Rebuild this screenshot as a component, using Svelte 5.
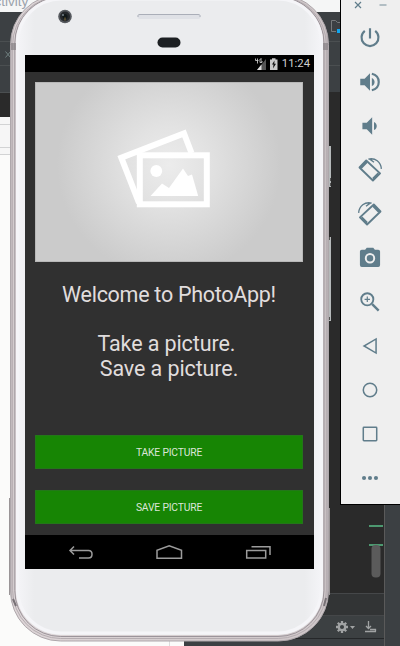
<script>
  const buttons = ['TAKE PICTURE', 'SAVE PICTURE'];
  const tools = ['power', 'volume-up', 'volume-down', 'rotate-left', 'rotate-right', 'camera', 'zoom', 'back', 'home', 'overview', 'more'];
</script>

<main class="desktop">
  <svg class="backdrop" width="400" height="646" viewBox="0 0 400 646">
    <rect width="400" height="646" fill="#fbfbfa" />
    <rect width="400" height="12" fill="#f5f6f6" />
    <text x="-5.500" y="6" font-size="13.500" fill="#9ba3ab" font-family="Liberation Sans, sans-serif">ctivity</text>
    <path d="M0 12h400v81H0z" fill="#3c4043" />
    <path d="M0 41.500h400M0 65.500h400M0 92.500h400" stroke="#4b4f51" />
    <path d="M0 93h400v24H0z" fill="#2a2a2a" />
    <path d="M5.500 51.500l5 6M10.500 51.500l-5 6" stroke="#708080" />
    <path d="M0 117h50v37H0z" fill="#f6f6f6" />
    <path d="M0 124.500h50M0 147.500h50M0 154.500h50" stroke="#d2d3d4" />
    <path d="M169.500 640v6" stroke="#ddd" />
    <path d="M184 600h216v46H184zM384 500h16v146h-16z" fill="#3c4043" />
    <path d="M184 638.500h200" stroke="#252729" />
    <path d="M300 92h100v501H300z" fill="#2a2a2a" />
    <path d="M300 593h84v22h-84z" fill="#323435" />
    <path d="M300 593.500h84M300 615.500h84" stroke="#454749" />
    <path d="M300 616h84v22h-84z" fill="#3c4042" />
    <path d="M384 500h16v146h-16z" fill="#3c4043" />
    <path d="M384.500 500v146" stroke="#5a5a5a" />
    <path d="M369 526h14M369 545h14" stroke="#4d9870" stroke-width="2" />
    <rect x="371.500" y="545" width="9" height="32.500" rx="4" fill="#5b5b5b" />
    <path d="M336 31.500h-4.500v-11h4l2 2h4v8" fill="none" stroke="#777a7c" />
    <path d="M337 29h4v4h-4z" fill="#10a5ef" />
    <g stroke="#a1a3a4" fill="none" stroke-width="2.300">
      <circle cx="342" cy="627" r="3.200" />
      <path d="M342 621v3M342 630v3M336 627h3M345 627h3M337.800 622.800l2 2M344.200 629.200l2 2M346.200 622.800l-2 2M339.800 629.200l-2 2" />
    </g>
    <path d="M350 626h5l-2.500 3z" fill="#a1a3a4" />
    <path d="M368.500 621v7M366 626l2.500 2.500 2.500-2.500M365 631.500h11M370 629.500h5.500v2" fill="none" stroke="#a1a3a4" stroke-width="1.300" />
  </svg>

  <svg class="frame" width="340" height="646" viewBox="0 0 340 646">
    <defs>
      <linearGradient id="metal">
        <stop offset="0" stop-color="#b4adb1" />
        <stop offset=".01" stop-color="#ddd5d7" />
        <stop offset=".99" stop-color="#cfc7c9" />
        <stop offset="1" stop-color="#ada6ab" />
      </linearGradient>
      <linearGradient id="face">
        <stop offset="0" stop-color="#f5f5f8" />
        <stop offset=".06" stop-color="#ebecee" />
        <stop offset=".94" stop-color="#ebecee" />
        <stop offset="1" stop-color="#f5f5f8" />
      </linearGradient>
    </defs>
    <path d="M328 146h3v41h-3zM328 237h3v84h-3z" fill="#b5b9ba" />
    <path d="M330.500 178v3M330.500 183v3M329.500 237v3M329.500 317v3" stroke="#555" />
    <path d="M9.500 498v97M329.500 508v87" stroke="#9a9597" />
    <rect x="10.500" y="-5.500" width="318" height="646.500" rx="50" fill="url(#metal)" stroke="#aea7ab" />
    <rect x="12.700" y="-3.500" width="313.600" height="642" rx="48" fill="none" stroke="#b5adb1" />
    <rect x="14.800" y="-3" width="309.200" height="639.500" rx="46" fill="none" stroke="#9b949a" />
    <rect x="16" y="-2" width="307" height="637" rx="45" fill="url(#face)" />
    <rect x="17.500" y="-1" width="304" height="634" rx="44" fill="none" stroke="#f5f5f8" stroke-width="3" />
    <path d="M11 43h5v7h-5zM323 43h5v7h-5z" fill="#878286" opacity=".7" />
    <path d="M13 599l3 7M326 598l-2 8" stroke="#777176" stroke-width="2" />
    <circle cx="65" cy="16.500" r="6.800" fill="#55585d" />
    <circle cx="65" cy="16.500" r="5" fill="#25282c" />
    <circle cx="65" cy="16.500" r="2.500" fill="#111719" />
    <path d="M65 17.500v3" stroke="#846d37" />
    <circle cx="63" cy="15" r="1" fill="#77838a" />
    <rect x="137.500" y="14" width="63" height="5" rx="2.500" fill="#dfe1e6" />
    <path d="M138 17v-1.500q0-1 2-1h58q2 0 2 1v1.500" fill="none" stroke="#aaaeb8" />
    <rect x="157.500" y="37.500" width="23" height="10" rx="5" fill="#1c1f22" />
  </svg>

  <section class="screen">
    <header class="status">
      <svg width="25" height="14" viewBox="254 56 25 14">
        <path d="M266 58v11h-9z" fill="#555" />
        <path d="M261.500 63.500v5.500H257z" fill="#ddd" />
        <path d="M255.500 57.500v2h3M257.500 57.500v5M262 58h-2v3.500h2V60h-1" fill="none" stroke="#c5c5c5" stroke-width=".9" />
        <path d="M270 58.500h2v-1.200h3.500v1.200h2V69H270z" fill="#c9c9c9" />
        <path d="M274.500 59.500l-2.500 4h1.500l-.5 4 3-4.700h-1.700z" fill="#111" />
      </svg>
      <span>11:24</span>
    </header>
    <div class="app">
      <div class="photo">
        <svg width="268" height="180" viewBox="35 82 268 180">
          <g fill="none" stroke="#fff" stroke-width="6">
            <path d="M191.500 153L184 133.500 121.300 157.700 139 203" />
            <rect x="139.800" y="155.300" width="67" height="49" />
          </g>
          <circle cx="156.300" cy="171" r="5.900" fill="#fff" />
          <path d="M150.500 196L162 183.500l7 4.500 14-19.500 5 7.500 4-1.500 6.200 21.500z" fill="#fff" />
        </svg>
      </div>
      <p class="message"><span class="welcome">Welcome to PhotoApp!</span><br /><br />Take a picture.&nbsp;<br />Save a picture.</p>
      <div class="actions">
        {#each buttons as label}
          <button>{label}</button>
        {/each}
      </div>
    </div>
    <nav class="nav">
      <svg width="289" height="34" viewBox="25 535 289 34" fill="none" stroke="#9c9c9c" stroke-width="1.500">
        <path d="M74 546.500l-4 4 4 4M70 550.500h18.500q3.500 0 3.500 3.800t-3.500 3.800H79" />
        <path d="M157 558.200v-8l12.200-4.400 12.300 4.400v8z" />
        <path d="M246.700 550.500h19v7.500h-19zM251.500 546.800h18.500v8.200" />
      </svg>
    </nav>
  </section>

  <aside class="panel">
    <div class="window-controls">
      <svg width="8" height="8" viewBox="0 0 8 8"><path d="M1 1l6 6M7 1L1 7" stroke="#607d8b" stroke-width="1.200" /></svg>
      <svg width="8" height="8" viewBox="0 0 8 8"><path d="M.5 4h7" stroke="#a3b2ba" stroke-width="1.600" /></svg>
    </div>
    {#each tools as tool}
      <button class="tool" aria-label={tool}>
        <svg width="26" height="26" viewBox="0 0 24 24" fill="none" stroke="#607d8b" stroke-width="1.400">
          {#if tool === 'power'}
            <path d="M12 3v9.500M7.200 5.500a7.800 7.800 0 1 0 9.600 0" stroke-width="2" />
          {:else if tool === 'volume-up'}
            <path d="M3 9v6h4l5 5V4L7 9zM13.700 8.200v7.600c3.400-1.600 3.400-6 0-7.600z" fill="#607d8b" stroke="none" />
            <path d="M13.700 4.400c8.500 2 8.500 13.200 0 15.200" stroke-width="2" />
          {:else if tool === 'volume-down'}
            <path d="M5 9v6h4l5 5V4L9 9zM15.700 8.200v7.600c3.400-1.600 3.400-6 0-7.600z" fill="#607d8b" stroke="none" />
          {:else if tool === 'rotate-left' || tool === 'rotate-right'}
            <g transform={tool === 'rotate-right' ? 'translate(24 0) scale(-1 1)' : undefined}>
              <path d="M8.500 3.200L2.300 9.700 14.700 21.700l6.600-6.600z" stroke-width="1.700" stroke-linejoin="round" />
              <path d="M8.900 4.400L3.500 9.900M14.900 20.300l5.100-5.100" stroke-width="2.500" />
              <path d="M10.500 2c6.300-1.500 11.500 2.500 12 9M11.500 1.700l4.200 3.200" stroke-width="1.300" />
            </g>
          {:else if tool === 'camera'}
            <path d="M9 2.500L7.500 4.300H4.400a1.700 1.700 0 0 0-1.700 1.700v12.500a1.700 1.700 0 0 0 1.700 1.700h15.200a1.700 1.700 0 0 0 1.700-1.700V6a1.700 1.700 0 0 0-1.700-1.700h-3.100L15 2.500z" fill="#607d8b" stroke="none" />
            <circle cx="12" cy="12.200" r="3.900" stroke="#efefef" stroke-width="1.800" />
          {:else if tool === 'zoom'}
            <circle cx="9.500" cy="9.500" r="5.600" stroke-width="1.700" />
            <path d="M14 14l6 6" stroke-width="2.200" />
            <path d="M7 9.500h5M9.500 7v5" stroke-width="1.100" />
          {:else if tool === 'back'}
            <path d="M17.600 5.500v13L6.500 12z" />
          {:else if tool === 'home'}
            <circle cx="12" cy="12" r="6.200" />
          {:else if tool === 'overview'}
            <rect x="5.800" y="5.800" width="12.400" height="12.400" rx=".6" />
          {:else}
            <g fill="#607d8b" stroke="none"><circle cx="6.500" cy="12" r="1.900" /><circle cx="12" cy="12" r="1.900" /><circle cx="17.500" cy="12" r="1.900" /></g>
          {/if}
        </svg>
      </button>
    {/each}
  </aside>
</main>

<style>
  :global(body) { margin: 0; }
  .desktop { position: relative; width: 400px; height: 646px; overflow: hidden; font-family: Roboto, sans-serif; }
  .backdrop, .frame { position: absolute; top: 0; left: 0; display: block; }
  .screen { position: absolute; left: 25px; top: 55px; width: 289px; height: 514px; display: flex; flex-direction: column; background: #303030; }
  .status { flex: 0 0 17px; height: 17px; display: flex; align-items: center; justify-content: flex-end; gap: 3px; box-sizing: border-box; padding-right: 4px; background: #000; color: #cfcfcf; font-size: 11.300px; line-height: 17px; }
  .status svg { display: block; }
  .app { flex: 1; min-height: 0; display: flex; flex-direction: column; padding: 10px 11px 11px 10px; box-sizing: border-box; }
  .photo { height: 180px; flex: none; background: radial-gradient(circle at 50% 46%, #ececec 0, #e2e2e2 40px, #cbcbcb 112px); box-shadow: inset 0 0 0 1px #b8b8b8; }
  .photo svg { display: block; }
  .message { margin: 21px 0 0; color: #e0dddd; font-size: 21.500px; line-height: 24.700px; letter-spacing: -0.100px; text-align: center; white-space: nowrap; }
  .welcome { letter-spacing: -0.280px; }
  .actions { margin-top: auto; display: flex; flex-direction: column; gap: 21px; }
  .actions button { height: 34px; padding: 0; border: 1px solid #237719; background: #178504; color: #dce5d9; font: 10.300px Roboto, sans-serif; letter-spacing: -0.170px; }
  .nav { flex: 0 0 34px; background: #000; }
  .nav svg { display: block; }
  .panel { position: absolute; left: 340px; top: -1px; width: 60px; height: 506px; box-sizing: border-box; border: solid #000; border-width: 0 0 1px 1px; background: #efefef; display: flex; flex-direction: column; }
  .window-controls { height: 17px; flex: none; display: flex; gap: 17px; padding: 2px 0 0 13px; box-sizing: border-box; }
  .window-controls svg { display: block; }
  .tool { width: 58px; height: 44px; flex: none; display: flex; align-items: center; justify-content: center; padding: 0; border: 0; background: none; }
  .tool svg { display: block; }
</style>
